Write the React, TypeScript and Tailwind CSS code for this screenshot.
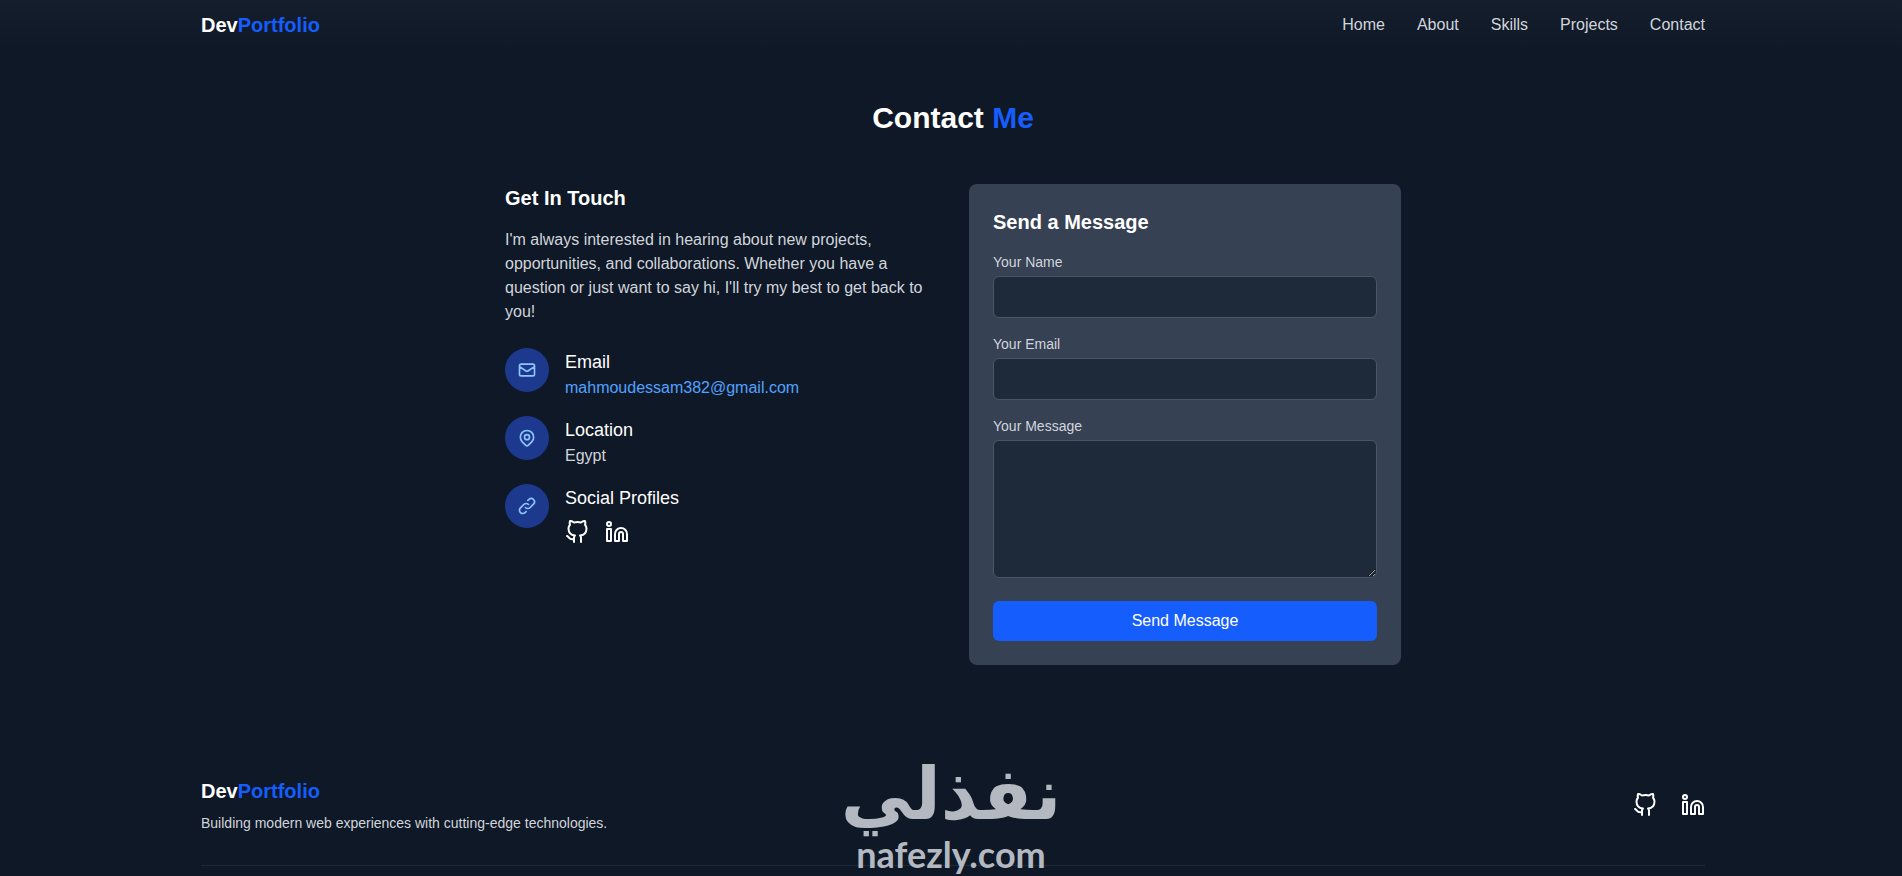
import type { ReactNode } from 'react';

const navItems = ['Home', 'About', 'Skills', 'Projects', 'Contact'];

const fieldClass =
  'w-full rounded-md border border-gray-600 bg-gray-800 px-4 py-2 text-white focus:outline-none focus:ring-2 focus:ring-blue-500';

function Icon({ className, children }: { className: string; children: ReactNode }) {
  return (
    <svg
      className={className}
      viewBox="0 0 24 24"
      fill="none"
      stroke="currentColor"
      strokeWidth={2}
      strokeLinecap="round"
      strokeLinejoin="round"
      aria-hidden="true"
    >
      {children}
    </svg>
  );
}

function Logo() {
  return (
    <a href="#home" className="block text-xl font-bold text-white">
      Dev<span className="text-blue-600">Portfolio</span>
    </a>
  );
}

function SocialLinks({ className }: { className: string }) {
  return (
    <div className={className}>
      <a href="#github" aria-label="GitHub" className="text-white">
        <Icon className="size-6">
          <path d="M9 19c-5 1.5-5-2.5-7-3m14 6v-3.87a3.37 3.37 0 0 0-.94-2.61c3.14-.35 6.44-1.54 6.44-7A5.44 5.44 0 0 0 20 4.77 5.07 5.07 0 0 0 19.91 1S18.73.65 16 2.48a13.38 13.38 0 0 0-7 0C6.27.65 5.09 1 5.09 1A5.07 5.07 0 0 0 5 4.77a5.44 5.44 0 0 0-1.5 3.78c0 5.42 3.3 6.61 6.44 7A3.37 3.37 0 0 0 9 18.13V22" />
        </Icon>
      </a>
      <a href="#linkedin" aria-label="LinkedIn" className="text-white">
        <Icon className="size-6">
          <path d="M16 8a6 6 0 0 1 6 6v7h-4v-7a2 2 0 0 0-2-2 2 2 0 0 0-2 2v7h-4v-7a6 6 0 0 1 6-6z" />
          <rect x="2" y="9" width="4" height="12" />
          <circle cx="4" cy="4" r="2" />
        </Icon>
      </a>
    </div>
  );
}

function InfoRow({ icon, title, children }: { icon: ReactNode; title: string; children: ReactNode }) {
  return (
    <div className="flex items-start gap-4">
      <div className="rounded-full bg-blue-900 p-3 text-blue-300">
        <Icon className="size-5">{icon}</Icon>
      </div>
      <div>
        <h4 className="text-lg font-medium text-white">{title}</h4>
        {children}
      </div>
    </div>
  );
}

function Field({ id, label, children }: { id: string; label: string; children: ReactNode }) {
  return (
    <div>
      <label htmlFor={id} className="mb-1 block text-sm text-gray-300">
        {label}
      </label>
      {children}
    </div>
  );
}

export default function App() {
  return (
    <div className="relative min-h-screen overflow-hidden bg-[#0f1826] pl-1 font-['Liberation_Sans',Arial,sans-serif] text-base">
      <header className="-ml-1 bg-linear-to-b from-[#151e2c] to-[#0f1826] pl-1">
        <div className="mx-auto flex max-w-screen-2xl items-center justify-between px-4 pt-[11px] pb-[13px]">
          <Logo />
          <nav className="flex gap-8">
            {navItems.map((item) => (
              <a key={item} href={`#${item.toLowerCase()}`} className="text-gray-300">
                {item}
              </a>
            ))}
          </nav>
        </div>
      </header>

      <main className="px-4 pt-12 pb-16">
        <h2 className="mb-12 text-center text-3xl font-bold text-white">
          Contact <span className="text-blue-600">Me</span>
        </h2>
        <div className="mx-auto grid max-w-4xl items-start gap-8 md:grid-cols-2">
          <section>
            <h3 className="mb-4 text-xl font-bold text-white">Get In Touch</h3>
            <p className="mb-6 text-gray-300">
              I'm always interested in hearing about new projects, opportunities, and collaborations. Whether you have
              a question or just want to say hi, I'll try my best to get back to you!
            </p>
            <div className="flex flex-col gap-4">
              <InfoRow
                title="Email"
                icon={
                  <path d="M3 8l7.89 5.26a2 2 0 002.22 0L21 8M5 19h14a2 2 0 002-2V7a2 2 0 00-2-2H5a2 2 0 00-2 2v10a2 2 0 002 2z" />
                }
              >
                <a href="mailto:mahmoudessam382@gmail.com" className="block text-blue-400">
                  mahmoudessam382@gmail.com
                </a>
              </InfoRow>
              <InfoRow
                title="Location"
                icon={
                  <>
                    <path d="M17.657 16.657L13.414 20.9a1.998 1.998 0 01-2.827 0l-4.244-4.243a8 8 0 1111.314 0z" />
                    <path d="M15 11a3 3 0 11-6 0 3 3 0 016 0z" />
                  </>
                }
              >
                <p className="text-gray-300">Egypt</p>
              </InfoRow>
              <InfoRow
                title="Social Profiles"
                icon={
                  <path d="M13.828 10.172a4 4 0 00-5.656 0l-4 4a4 4 0 105.656 5.656l1.102-1.101m-.758-4.899a4 4 0 005.656 0l4-4a4 4 0 00-5.656-5.656l-1.1 1.1" />
                }
              >
                <SocialLinks className="mt-2 flex gap-4" />
              </InfoRow>
            </div>
          </section>

          <section className="rounded-lg bg-gray-700 p-6">
            <h3 className="mb-4 text-xl font-bold text-white">Send a Message</h3>
            <form className="flex flex-col gap-4" onSubmit={(e) => e.preventDefault()}>
              <Field id="name" label="Your Name">
                <input id="name" type="text" className={fieldClass} />
              </Field>
              <Field id="email" label="Your Email">
                <input id="email" type="email" className={fieldClass} />
              </Field>
              <Field id="message" label="Your Message">
                <textarea id="message" rows={5} className={fieldClass} />
              </Field>
              <button type="submit" className="rounded-md bg-blue-600 px-4 py-2 font-medium text-white">
                Send Message
              </button>
            </form>
          </section>
        </div>
      </main>

      <footer className="mx-auto max-w-screen-2xl px-4 pt-12">
        <div className="flex items-center justify-between border-b border-gray-800 pb-8">
          <div>
            <Logo />
            <p className="mt-2 text-sm text-gray-300">Building modern web experiences with cutting-edge technologies.</p>
          </div>
          <SocialLinks className="flex gap-6" />
        </div>
      </footer>

      <div className="pointer-events-none absolute bottom-0 left-1/2 flex -translate-x-1/2 flex-col items-center font-bold text-[#b4b9c1]">
        <span lang="ar" dir="rtl" className="font-['DejaVu_Sans',sans-serif] text-7xl leading-[76px]">
          نفذلي
        </span>
        <span className="font-[Lato,sans-serif] text-4xl leading-[44px]">nafezly.com</span>
      </div>
    </div>
  );
}
